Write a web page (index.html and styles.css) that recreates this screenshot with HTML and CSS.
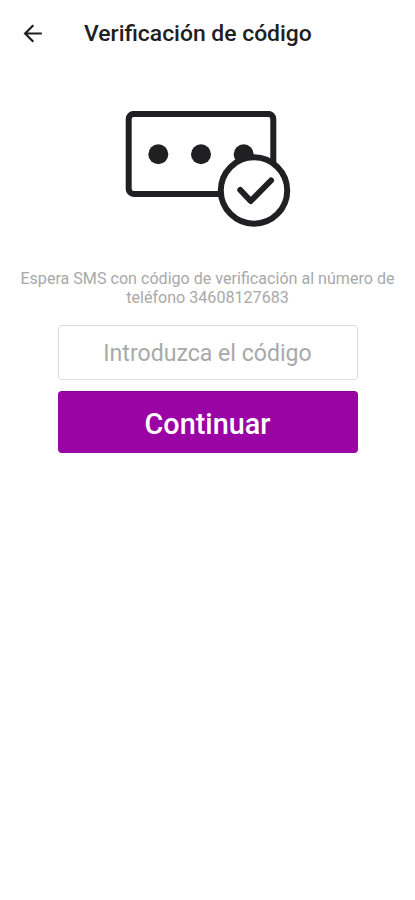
FILE: index.html
```html
<!DOCTYPE html>
<html lang="es">
<head>
<meta charset="utf-8">
<meta name="viewport" content="width=device-width, initial-scale=1">
<title>Verificación de código</title>
<link rel="stylesheet" href="styles.css">
</head>
<body>
<header class="bar">
  <button class="back" aria-label="Atrás">
    <svg width="20" height="20" viewBox="0 0 20 20"><path d="M18.800 9.500H2.500M10.300 1.300L2.100 9.500l8.200 8.200"/></svg>
  </button>
  <h1 class="title">Verificación de código</h1>
</header>
<main class="content">
  <svg class="art" width="167" height="117" viewBox="0 0 167 117">
    <rect class="line" x="4.700" y="2.900" width="144.600" height="80" rx="5"/>
    <circle cx="34.300" cy="43.300" r="10"/><circle cx="77" cy="43.300" r="10"/><circle cx="119.700" cy="43.300" r="10"/>
    <circle class="badge" cx="130" cy="79.500" r="33.200"/>
    <path class="line" d="M116.300 79l10.400 11 20.300-20.500"/>
  </svg>
  <p class="hint">Espera SMS con código de verificación al número de<br>teléfono 34608127683</p>
  <form class="form">
    <input class="code" type="text" placeholder="Introduzca el código">
    <button class="submit" type="button">Continuar</button>
  </form>
</main>
</body>
</html>
```
FILE: styles.css
```css
* { box-sizing: border-box; }
body { margin: 0; background: #fff; font-family: Roboto, sans-serif; }
.bar { display: flex; align-items: center; height: 67px; padding-left: 23px; }
.back { display: flex; width: 20px; height: 20px; margin-right: 41px; padding: 0; border: 0; background: none; }
.back path { fill: none; stroke: #202020; stroke-width: 2.2; }
.title { margin: 0; font-size: 22.9px; font-weight: 500; color: #202020; white-space: nowrap; }
.content { display: flex; flex-direction: column; align-items: center; }
.art { display: block; margin-top: 44px; fill: #202022; }
.line { fill: none; stroke: #202022; stroke-width: 6; stroke-linecap: round; stroke-linejoin: round; }
.badge { fill: #fff; stroke: #202022; stroke-width: 6; }
.hint { margin: 41px 0 0; font-size: 16.1px; line-height: 19px; text-align: center; color: #a9a9a9; white-space: nowrap; }
.form { display: flex; flex-direction: column; gap: 11px; width: 300px; margin-top: 18px; }
.code { height: 55px; padding: 2px 0 0; border: 1px solid #ddd; border-radius: 4px; font: 400 23.1px Roboto, sans-serif; text-align: center; }
.code::placeholder { color: #a9a9a9; opacity: 1; }
.submit { height: 62px; padding: 2px 0 0; border: 0; border-top: 1px solid #820592; border-radius: 4px; background: #9a04a4; color: #fff; font: 500 28.8px Roboto, sans-serif; }
```
